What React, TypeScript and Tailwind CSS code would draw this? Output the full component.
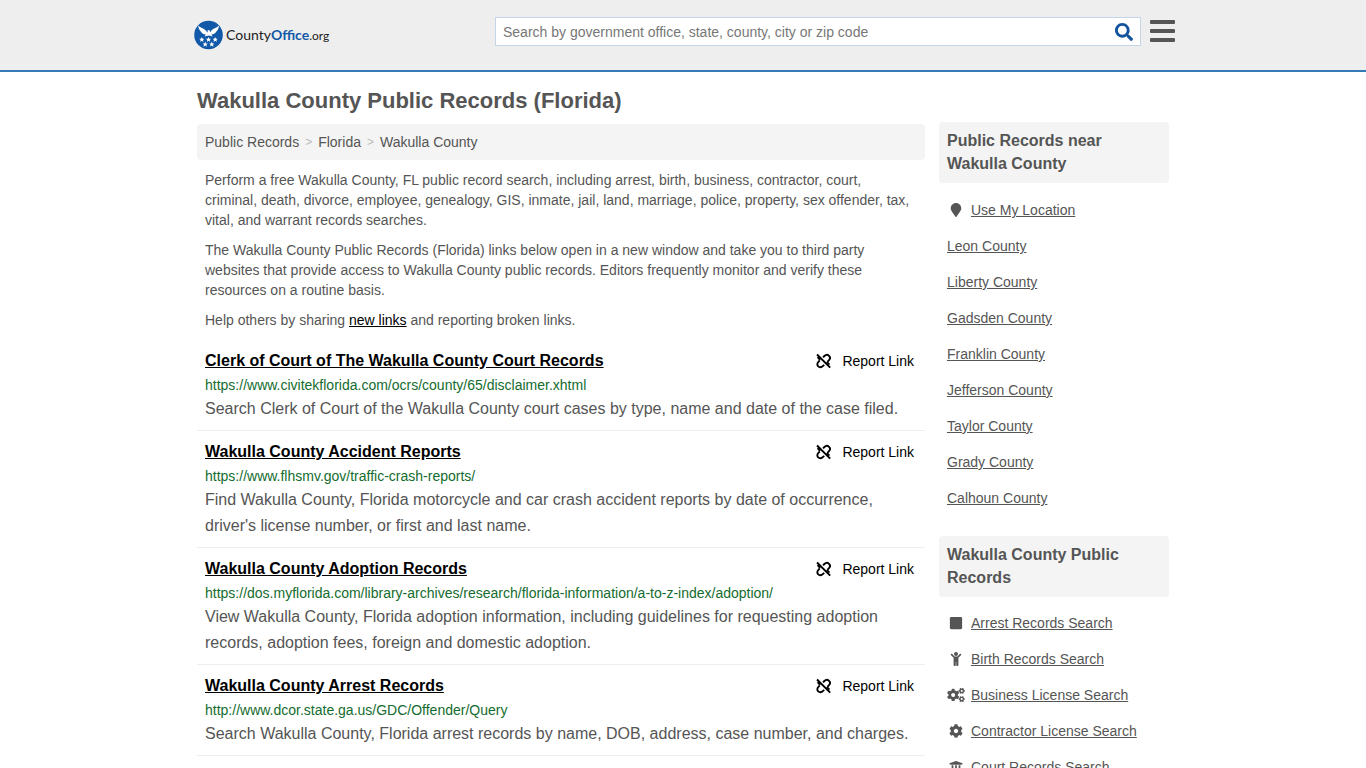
import {
  FaChild,
  FaCog,
  FaCogs,
  FaMapMarker,
  FaSearch,
  FaSquare,
  FaUniversity,
} from "react-icons/fa";

const records = [
  {
    title: "Clerk of Court of The Wakulla County Court Records",
    url: "https://www.civitekflorida.com/ocrs/county/65/disclaimer.xhtml",
    description:
      "Search Clerk of Court of the Wakulla County court cases by type, name and date of the case filed.",
  },
  {
    title: "Wakulla County Accident Reports",
    url: "https://www.flhsmv.gov/traffic-crash-reports/",
    description:
      "Find Wakulla County, Florida motorcycle and car crash accident reports by date of occurrence, driver's license number, or first and last name.",
  },
  {
    title: "Wakulla County Adoption Records",
    url: "https://dos.myflorida.com/library-archives/research/florida-information/a-to-z-index/adoption/",
    description:
      "View Wakulla County, Florida adoption information, including guidelines for requesting adoption records, adoption fees, foreign and domestic adoption.",
  },
  {
    title: "Wakulla County Arrest Records",
    url: "http://www.dcor.state.ga.us/GDC/Offender/Query",
    description:
      "Search Wakulla County, Florida arrest records by name, DOB, address, case number, and charges.",
  },
];

const nearby = [
  "Leon County",
  "Liberty County",
  "Gadsden County",
  "Franklin County",
  "Jefferson County",
  "Taylor County",
  "Grady County",
  "Calhoun County",
];

const searches = [
  { label: "Arrest Records Search", Icon: FaSquare },
  { label: "Birth Records Search", Icon: FaChild },
  { label: "Business License Search", Icon: FaCogs },
  { label: "Contractor License Search", Icon: FaCog },
  { label: "Court Records Search", Icon: FaUniversity },
];

const star = "M0 -2.7L.8 -.9L2.6 -.8L1.2 .4L1.7 2.3L0 1.2L-1.7 2.3L-1.2 .4L-2.6 -.8L-.8 -.9Z";

function Logo() {
  return (
    <a href="#" className="flex items-center gap-0.5 text-sm text-[#222]">
      <svg viewBox="0 0 30 30" className="h-[30px] w-[30px]" aria-hidden="true">
        <circle cx="14.5" cy="15" r="14.3" fill="#1159a8" />
        <g fill="#fff">
          <path d="M4.2 5.6C6.4 7.8 9.6 8.4 11.8 10.4L13.4 12.6L14 11.4L13 11L14.4 10.1L15.8 10.5L16 12.6L17.4 10.4C19.6 8.4 22.8 7.8 25 5.6C24.8 8.2 23.9 10.2 22.4 11.4C21.2 13.2 19.6 14.3 17.4 14.6L18.6 16.4L14.6 15.4L10.6 16.4L11.8 14.6C9.6 14.3 8 13.2 6.8 11.4C5.3 10.2 4.4 8.2 4.2 5.6Z" />
          <path d={star} transform="translate(7.8 19.6)" />
          <path d={star} transform="translate(14.5 19.6)" />
          <path d={star} transform="translate(21.2 19.6)" />
          <path d={star} transform="translate(11.2 24.4)" />
          <path d={star} transform="translate(17.8 24.4)" />
        </g>
      </svg>
      <span className="font-[Lato,sans-serif]">
        County<span className="font-bold text-[#1159a8]">Office</span>
        <span className="text-xs">.org</span>
      </span>
    </a>
  );
}

function BrokenLinkIcon() {
  return (
    <svg
      viewBox="0 0 16 16"
      className="h-4 w-4"
      fill="none"
      stroke="currentColor"
      strokeWidth="1.9"
      aria-hidden="true"
    >
      <path d="M2 1.5L15.2 14.7" />
      <path d="M8 4.4L9.4 3C10.8 1.6 12.8 1.6 14 2.8C15.2 4 15.2 6 13.8 7.4L12.4 8.8" />
      <path d="M9.2 11.8L7.8 13.2C6.4 14.6 4.4 14.6 3.2 13.4C2 12.2 2 10.2 3.4 8.8L4.8 7.4" />
      <path d="M2.6 4.2L5 6.8" />
      <path d="M11.8 9L14.4 11.6" />
    </svg>
  );
}

function Header() {
  return (
    <header className="border-b-2 border-[#337ab7] bg-[#eee]">
      <div className="mx-auto flex h-[70px] max-w-[984px] items-start justify-between">
        <div className="pt-5 pl-[3px]">
          <Logo />
        </div>
        <div className="flex items-start gap-[9px] pt-[17px]">
          <form className="flex h-[29px] w-[646px] items-center border border-[#c3d5e6] bg-white">
            <input
              type="text"
              aria-label="Search"
              placeholder="Search by government office, state, county, city or zip code"
              className="min-w-0 flex-1 px-[7px] text-sm outline-none placeholder:text-[#777]"
            />
            <button type="button" aria-label="Submit search" className="pr-[7px] text-[#11539d]">
              <FaSearch size={18} />
            </button>
          </form>
          <button type="button" aria-label="Menu" className="mt-[3px] flex flex-col gap-[5px]">
            <span className="h-1 w-[25px] rounded-[1px] bg-[#555]" />
            <span className="h-1 w-[25px] rounded-[1px] bg-[#555]" />
            <span className="h-1 w-[25px] rounded-[1px] bg-[#555]" />
          </button>
        </div>
      </div>
    </header>
  );
}

export default function App() {
  return (
    <div className="min-h-screen bg-white font-['Liberation_Sans',Arial,sans-serif] text-sm text-[#555]">
      <Header />

      <div className="mx-auto flex max-w-[972px] gap-[14px]">
        {/* Main column */}
        <main className="min-w-0 flex-1">
          <h1 className="pt-3.5 pb-2 text-[22px] leading-[30px] font-bold">
            Wakulla County Public Records (Florida)
          </h1>
          <nav aria-label="Breadcrumb" className="flex h-9 items-center gap-1.5 rounded bg-[#f4f4f4] px-2">
            <a href="#">Public Records</a>
            <span className="text-xs text-[#bbb]">&gt;</span>
            <a href="#">Florida</a>
            <span className="text-xs text-[#bbb]">&gt;</span>
            <a href="#">Wakulla County</a>
          </nav>

          <div className="space-y-2.5 px-2 py-2.5 leading-5">
            <p>
              Perform a free Wakulla County, FL public record search, including arrest, birth,
              business, contractor, court, criminal, death, divorce, employee, genealogy, GIS,
              inmate, jail, land, marriage, police, property, sex offender, tax, vital, and warrant
              records searches.
            </p>
            <p>
              The Wakulla County Public Records (Florida) links below open in a new window and take
              you to third party websites that provide access to Wakulla County public records.
              Editors frequently monitor and verify these resources on a routine basis.
            </p>
            <p>
              Help others by sharing{" "}
              <a href="#" className="text-black underline">
                new links
              </a>{" "}
              and reporting broken links.
            </p>
          </div>

          <ul>
            {records.map((record) => (
              <li key={record.title} className="border-b border-[#eee] p-2">
                <div className="flex items-center justify-between pr-[3px]">
                  <a href="#" className="text-base leading-[26px] font-bold text-black underline">
                    {record.title}
                  </a>
                  <a href="#" className="flex items-center gap-[11px] text-black">
                    <BrokenLinkIcon />
                    Report Link
                  </a>
                </div>
                <p className="leading-[22px] text-[#146c2e]">{record.url}</p>
                <p className="text-base leading-[26px]">{record.description}</p>
              </li>
            ))}
          </ul>
        </main>

        {/* Sidebar */}
        <aside className="w-[230px] shrink-0 pt-[50px]">
          <h2 className="rounded bg-[#f4f4f4] px-2 pt-[7px] pb-2 text-base leading-[23px] font-bold">
            Public Records near Wakulla County
          </h2>
          <ul className="px-2 pt-[9px] pb-5">
            <li className="flex h-9 items-center gap-1.5">
              <span className="flex w-[18px] justify-center">
                <FaMapMarker size={14} />
              </span>
              <a href="#" className="underline">
                Use My Location
              </a>
            </li>
            {nearby.map((county) => (
              <li key={county} className="flex h-9 items-center">
                <a href="#" className="underline">
                  {county}
                </a>
              </li>
            ))}
          </ul>

          <h2 className="rounded bg-[#f4f4f4] px-2 pt-[7px] pb-2 text-base leading-[23px] font-bold">
            Wakulla County Public Records
          </h2>
          <ul className="px-2 pt-2">
            {searches.map(({ label, Icon }) => (
              <li key={label} className="flex h-9 items-center gap-1.5">
                <span className="flex w-[18px] justify-center">
                  <Icon className="h-3.5 w-[18px]" />
                </span>
                <a href="#" className="underline">
                  {label}
                </a>
              </li>
            ))}
          </ul>
        </aside>
      </div>
    </div>
  );
}
